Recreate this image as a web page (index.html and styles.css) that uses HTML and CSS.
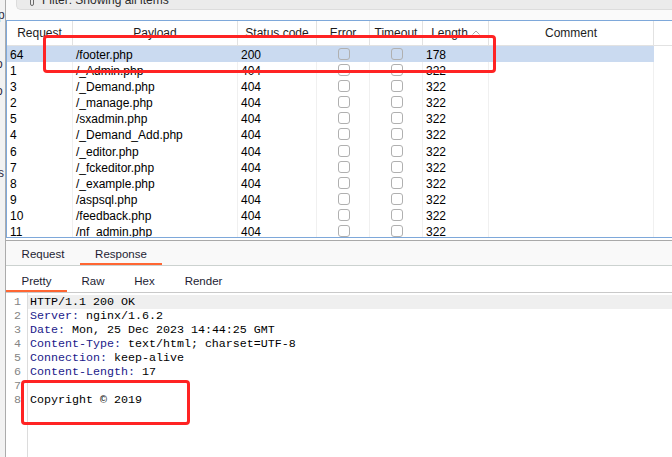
FILE: index.html
```html
<!DOCTYPE html>
<html>
<head>
<meta charset="utf-8">
<link rel="stylesheet" href="styles.css">
</head>
<body>
<div class="app">
  <div class="side">
    <div class="g g1">p</div>
    <div class="g g2">o</div>
    <div class="g g3">o</div>
    <div class="g g4">s</div>
  </div>
  <div class="main">
    <div class="top">
      <div class="filter">
        <svg class="funnel" width="6" height="7" viewBox="0 0 6 7"><rect x="1.5" y="-4" width="3" height="9.5" rx="1.5" fill="none" stroke="#6a6a6a" stroke-width="1"/></svg>
        <span class="ftext">Filter: Showing all items</span>
      </div>
    </div>
    <div class="table">
      <div class="thead">
        <div class="th">Request</div>
        <div class="th">Payload</div>
        <div class="th">Status code</div>
        <div class="th">Error</div>
        <div class="th">Timeout</div>
        <div class="th th-len"><span>Length</span><svg width="8" height="5" viewBox="0 0 8 5"><path d="M0.5 4.5 L4 1 L7.5 4.5" fill="none" stroke="#a8a8a8" stroke-width="1"/></svg></div>
        <div class="th">Comment</div>
        <div class="th rest"></div>
      </div>
      <div class="tbody">
        <div class="row sel"><div class="td">64</div><div class="td">/footer.php</div><div class="td">200</div><div class="td"><div class="cb"></div></div><div class="td"><div class="cb"></div></div><div class="td">178</div><div class="td"></div><div class="td rest"></div></div>
        <div class="row"><div class="td">1</div><div class="td">/_Admin.php</div><div class="td">404</div><div class="td"><div class="cb"></div></div><div class="td"><div class="cb"></div></div><div class="td">322</div><div class="td"></div><div class="td rest"></div></div>
        <div class="row"><div class="td">3</div><div class="td">/_Demand.php</div><div class="td">404</div><div class="td"><div class="cb"></div></div><div class="td"><div class="cb"></div></div><div class="td">322</div><div class="td"></div><div class="td rest"></div></div>
        <div class="row"><div class="td">2</div><div class="td">/_manage.php</div><div class="td">404</div><div class="td"><div class="cb"></div></div><div class="td"><div class="cb"></div></div><div class="td">322</div><div class="td"></div><div class="td rest"></div></div>
        <div class="row"><div class="td">5</div><div class="td">/sxadmin.php</div><div class="td">404</div><div class="td"><div class="cb"></div></div><div class="td"><div class="cb"></div></div><div class="td">322</div><div class="td"></div><div class="td rest"></div></div>
        <div class="row"><div class="td">4</div><div class="td">/_Demand_Add.php</div><div class="td">404</div><div class="td"><div class="cb"></div></div><div class="td"><div class="cb"></div></div><div class="td">322</div><div class="td"></div><div class="td rest"></div></div>
        <div class="row"><div class="td">6</div><div class="td">/_editor.php</div><div class="td">404</div><div class="td"><div class="cb"></div></div><div class="td"><div class="cb"></div></div><div class="td">322</div><div class="td"></div><div class="td rest"></div></div>
        <div class="row"><div class="td">7</div><div class="td">/_fckeditor.php</div><div class="td">404</div><div class="td"><div class="cb"></div></div><div class="td"><div class="cb"></div></div><div class="td">322</div><div class="td"></div><div class="td rest"></div></div>
        <div class="row"><div class="td">8</div><div class="td">/_example.php</div><div class="td">404</div><div class="td"><div class="cb"></div></div><div class="td"><div class="cb"></div></div><div class="td">322</div><div class="td"></div><div class="td rest"></div></div>
        <div class="row"><div class="td">9</div><div class="td">/aspsql.php</div><div class="td">404</div><div class="td"><div class="cb"></div></div><div class="td"><div class="cb"></div></div><div class="td">322</div><div class="td"></div><div class="td rest"></div></div>
        <div class="row"><div class="td">10</div><div class="td">/feedback.php</div><div class="td">404</div><div class="td"><div class="cb"></div></div><div class="td"><div class="cb"></div></div><div class="td">322</div><div class="td"></div><div class="td rest"></div></div>
        <div class="row"><div class="td">11</div><div class="td">/nf_admin.php</div><div class="td">404</div><div class="td"><div class="cb"></div></div><div class="td"><div class="cb"></div></div><div class="td">322</div><div class="td"></div><div class="td rest"></div></div>
      </div>
    </div>
    <div class="spacer"></div>
    <div class="tabs">
      <div class="tab t-req">Request</div>
      <div class="tab t-res on">Response</div>
    </div>
    <div class="subtabs">
      <div class="stab s-pretty on">Pretty</div>
      <div class="stab s-raw">Raw</div>
      <div class="stab s-hex">Hex</div>
      <div class="stab s-render">Render</div>
    </div>
    <div class="code">
      <div class="gutter">
        <div>1</div><div>2</div><div>3</div><div>4</div><div>5</div><div>6</div><div>7</div><div>8</div>
      </div>
      <div class="lines">
        <div class="ln cur">HTTP/1.1 200 OK</div>
        <div class="ln"><span class="k">Server:</span> nginx/1.6.2</div>
        <div class="ln"><span class="k">Date:</span> Mon, 25 Dec 2023 14:44:25 GMT</div>
        <div class="ln"><span class="k">Content-Type:</span> text/html; charset=UTF-8</div>
        <div class="ln"><span class="k">Connection:</span> keep-alive</div>
        <div class="ln"><span class="k">Content-Length:</span> 17</div>
        <div class="ln">&nbsp;</div>
        <div class="ln">Copyright © 2019</div>
      </div>
    </div>
  </div>
  <div class="mark mark1"></div>
  <div class="mark mark2"></div>
</div>
</body>
</html>
```

FILE: styles.css
```css
* { box-sizing: border-box; }
html, body { margin: 0; padding: 0; }
body {
  width: 672px;
  height: 457px;
  overflow: hidden;
  background: #fff;
  font-family: "Liberation Sans", Arial, sans-serif;
  font-size: 12px;
  color: #000;
}
.app {
  position: relative;
  display: flex;
  width: 672px;
  height: 457px;
}
.side {
  width: 6px;
  flex: none;
  background: #f2f2f2;
  border-right: 1px solid #ababab;
  overflow: hidden;
  font-size: 12px;
  line-height: 14px;
  color: #2e2a44;
}
.g { height: 14px; white-space: nowrap; }
.g1 { margin-top: 8px; margin-left: -2px; }
.g2 { margin-top: 35px; margin-left: -4px; }
.g3 { margin-top: 13px; margin-left: -4px; }
.g4 { margin-top: 68px; margin-left: -2px; }

.main {
  flex: 1;
  min-width: 0;
  display: flex;
  flex-direction: column;
  overflow: hidden;
}
.top {
  height: 20px;
  flex: none;
  background: #fafafa;
  padding-left: 10px;
}
.filter {
  height: 10px;
  background: #ebebeb;
  border-left: 1px solid #dcdcdc;
  border-bottom: 1px solid #dcdcdc;
  border-bottom-left-radius: 5px;
  display: flex;
  align-items: flex-start;
  overflow: hidden;
  padding-left: 12px;
}
.funnel { flex: none; display: block; }
.ftext {
  display: block;
  margin-top: -7px;
  margin-left: 7px;
  line-height: 14px;
  color: #2b2b2b;
  white-space: nowrap;
}

.table {
  flex: none;
  height: 218px;
  border: 1px solid #7ea8da;
  border-right: none;
  overflow: hidden;
}
.thead, .row {
  display: grid;
  grid-template-columns: 66px 165px 79px 53px 53px 66px 165px 1fr;
}
.thead {
  height: 25px;
  border-bottom: 1px solid #e2e2e2;
}
.th {
  border-right: 1px solid #e2e2e2;
  text-align: center;
  padding-top: 1px;
  line-height: 23px;
  color: #1c1c1c;
  white-space: nowrap;
  overflow: hidden;
}
.th-len {
  display: flex;
  justify-content: center;
  align-items: center;
  gap: 4px;
}
.th-len svg { display: block; margin-top: -3px; }
.th.rest { border-right: none; }

.row { height: 16.1px; }
.td {
  border-right: 1px solid #f0f0f0;
  padding-left: 3px;
  padding-top: 1px;
  line-height: 16px;
  white-space: nowrap;
  overflow: hidden;
}
.td.rest { border-right: none; }
.row.sel .td:not(.rest) {
  background: #cadaf0;
  border-right-color: #cadaf0;
}
.cb {
  width: 12px;
  height: 12px;
  margin: 1px auto 0;
  border: 1px solid #b0b0b0;
  border-radius: 3px;
  position: relative;
  left: -1px;
}

.spacer { height: 2px; flex: none; }
.tabs {
  flex: none;
  height: 26px;
  background: #f9f9f9;
  border-top: 1px solid #a9a9a9;
  border-bottom: 1px solid #ccd2d0;
  display: flex;
}
.tab, .stab {
  text-align: center;
  font-size: 11.5px;
  color: #1d1d33;
  border-bottom: 2px solid transparent;
  white-space: nowrap;
}
.tab {
  height: 24px;
  padding-top: 4px;
  line-height: 18px;
}
.t-req { width: 74px; }
.t-res { width: 82px; }
.tab.on, .stab.on { border-bottom-color: #ff6633; }

.subtabs {
  flex: none;
  height: 27px;
  border-bottom: 1px solid #c9c9c9;
  display: flex;
}
.stab {
  height: 26px;
  padding-top: 6px;
  line-height: 18px;
}
.s-pretty { width: 61px; }
.s-raw { width: 52px; }
.s-hex { width: 51px; }
.s-render { width: 67px; }

.code {
  flex: 1;
  display: flex;
  font-family: "Liberation Mono", "Courier New", monospace;
  font-size: 11.67px;
  line-height: 14px;
}
.gutter {
  width: 22px;
  flex: none;
  border-right: 1px solid #dcdcdc;
  padding-top: 2px;
  padding-right: 6px;
  text-align: right;
  color: #858585;
}
.gutter div { height: 14px; }
.lines {
  flex: 1;
  padding-top: 2px;
}
.ln {
  height: 14px;
  padding-left: 2px;
  white-space: pre;
  color: #000;
}
.ln.cur { background: #efefef; }
.k { color: #1a1a8a; }

.mark {
  position: absolute;
  border: 3px solid #ff2323;
  border-radius: 4px;
  pointer-events: none;
}
.mark1 { left: 43px; top: 35px; width: 453px; height: 38px; }
.mark2 { left: 21px; top: 380px; width: 169px; height: 45px; }
```
